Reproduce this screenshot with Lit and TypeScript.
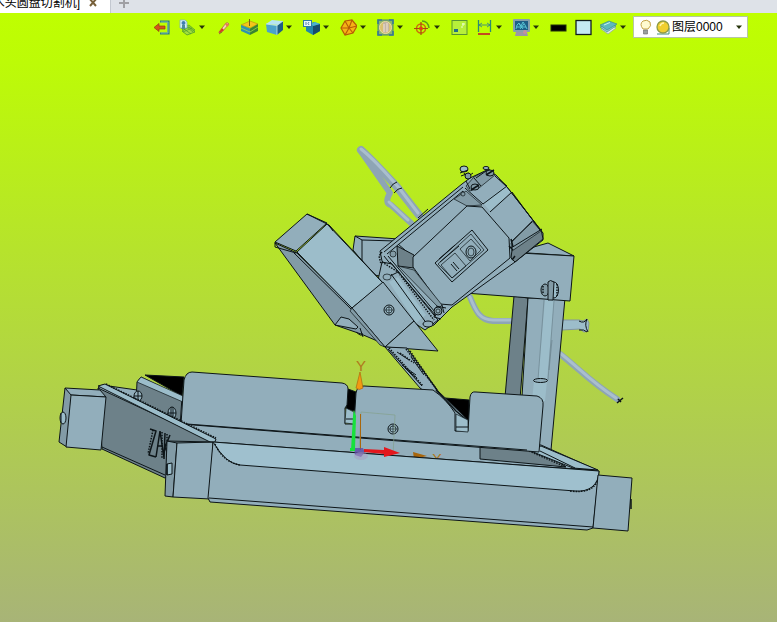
import { LitElement, html, svg, css } from "lit";
import { customElement } from "lit/decorators.js";

const caret = html`<svg class="caret" viewBox="0 0 12 17" aria-hidden="true"><path d="M3 6.500h6l-3 3.500z" fill="#26340a"/></svg>`;

const icons: Record<string, unknown> = {
  exit: svg`<path d="M6 2.500h8.500v12H6" fill="none" stroke="#2f7f86" stroke-width="2.200"/><path d="M7 3h7v11H7" fill="none" stroke="#86c9b8" stroke-width=".8"/><path d="M0 8.500l5-4V7h6v3H5v2.500z" fill="#d4541c" stroke="#8e4410" stroke-width=".7"/>`,
  sheets: svg`<path d="M2 9l8-3 6 5-8 4z" fill="#8ad02c" stroke="#5aa62c" stroke-width=".8"/><path d="M3 12l7-4 6 5-8 3z" fill="#a3de3c" stroke="#4b9e2c" stroke-width=".8"/><path d="M5 10l7 5M8 8l6 5M4 13l9-4" stroke="#4b9e2c" stroke-width=".7"/><path d="M1 1h5l2 2v6H1z" fill="#d9f0f5" stroke="#7fb4bd" stroke-width=".8"/><circle cx="4.500" cy="4" r="2" fill="#3f7eb0"/><path d="M3 6h3v4H3z" fill="#4d8b9b"/>`,
  pencil: svg`<path d="M3 13l7-9q2-1 3 1l-7 8-3 1z" fill="#f4d8b4" stroke="#b36a45" stroke-width=".8"/><path d="M3 13l3-4 2 2-4 3z" fill="#d2431c"/><path d="M9 5l2-1 2 2-2 2z" fill="#e77b52"/><path d="M3 15l3-2" stroke="#8c7a20"/>`,
  box: svg`<path d="M0 6l9-4 8 3-8 4z" fill="#f4c51b" stroke="#b89a10" stroke-width=".7"/><path d="M0 6l9 3.500V16l-9-4z" fill="#2f93b0"/><path d="M9 9.500L17 5v7l-8 4z" fill="#3a8432"/><path d="M0 9l9 4 8-5" stroke="#9ad84a" stroke-width=".8" fill="none"/><path d="M8.500 0v7" stroke="#725f1c"/>`,
  cube: svg`<path d="M0 5l6-4 11 1-5 4z" fill="#b7e4f2"/><path d="M0 5l11 1.500V16L1 13z" fill="#4ba2cb"/><path d="M11 6.500L17 2v9l-6 5z" fill="#1f5d86"/><path d="M0 5l11 1.500L17 2M11 6.500V16" fill="none" stroke="#c4e8f3" stroke-width=".8"/>`,
  view: svg`<path d="M3 6l8-3 6 2v7l-7 4-7-4z" fill="#2286a8"/><path d="M10 7l7-2v7l-7 4z" fill="#174d6c"/><path d="M8 5l4-2 5 2-7 2z" fill="#4bb3cd"/><rect x=".5" y="1.500" width="8" height="6" fill="#e9f6fa" stroke="#2d7aa5"/><path d="M3 3v3M6 3l-1 1.500L6 6" stroke="#2a6594" stroke-width=".8" fill="none"/>`,
  wire: svg`<path d="M5 2l7-1 5 6-4 7-8 2-4-7z" fill="#f6b315" stroke="#b75a06" stroke-width="1.200"/><path d="M5 2l4 7-4 7M12 1L9 9l4 5M1 9h8l8-2" fill="none" stroke="#b75a06" stroke-width="1.100"/>`,
  shade: svg`<rect x="1" y="1" width="15" height="15" fill="#8cb66b" stroke="#4c8377"/><circle cx="8.500" cy="8.500" r="6" fill="#d9c16f" stroke="#eddca0"/><path d="M6 4q4-3 6 1v6q-2 4-6 2z" fill="#c4b5a6"/><path d="M7 5v8M10 4v9" stroke="#f4e6cd"/><path d="M1 5V1h4M12 1h4v4M16 12v4h-4M5 16H1v-4" fill="none" stroke="#387a96" stroke-width="1.600"/>`,
  target: svg`<circle cx="7" cy="9.500" r="4.500" fill="none" stroke="#ca6e0b" stroke-width="1.500"/><path d="M7 3v13M0 9.500h14" stroke="#a84812" stroke-width="1.200"/><circle cx="7" cy="9.500" r="2" fill="#e04216"/><path d="M8 2q6 0 7 7" fill="none" stroke="#5f9c1b" stroke-width="1.500"/>`,
  panel: svg`<rect x="1" y="1.500" width="15" height="14" fill="#b7ef3a" stroke="#579432"/><rect x="3" y="10" width="4" height="3" fill="#236f87"/><path d="M11 5h3M12 4v3M10 8h2" stroke="#e8ffd0"/>`,
  dim: svg`<path d="M2.500 1v12M14.500 1v12" stroke="#2c8a74" stroke-width="1.300"/><path d="M3 6h11M3 6l3-2M3 6l3 2M14 6l-3-2M14 6l-3 2" fill="none" stroke="#2b7c91" stroke-width=".8"/><path d="M2 14h12v2H2z" fill="#c44a20"/>`,
  monitor: svg`<rect x="0" y="0" width="17" height="13" rx="1" fill="#86a0ac"/><rect x="2" y="2" width="13" height="9" fill="#1d5f86"/><path d="M3 10l1-4 2-2 2 3 2-4 2 3 2 4M4 8h9M6 5l4 5M11 5l-4 5" fill="none" stroke="#5fd0dc" stroke-width=".9"/><path d="M3 13h11l1 4H2z" fill="#9b98a4"/><circle cx="12" cy="13" r="2" fill="#c392a0"/>`,
  line: svg`<rect x="1" y="6" width="15" height="6" fill="#000" stroke="#20300a"/>`,
  fill: svg`<rect x="1" y="1.500" width="15" height="14" fill="#c4eaf2" stroke="#101c20" stroke-width="1.300"/>`,
  layer: svg`<path d="M1 10l7 5 8-6-5-3z" fill="#e4ece6" stroke="#8aa8a0" stroke-width=".7"/><path d="M0 8l7 5 9-6-5-3z" fill="#8ecbcf" stroke="#33838b" stroke-width=".6"/><path d="M0 6l7 5 10-6-8-3z" fill="#5eb9bd" stroke="#33838b" stroke-width=".6"/><path d="M4 6l6-2.500" stroke="#c8f1ee"/>`,
};

const tools: [string, string, boolean][] = [
  ["exit", "退出", false], ["sheets", "对象", true], ["pencil", "编辑", false], ["box", "拉伸", false],
  ["cube", "实体", true], ["view", "视图", true], ["wire", "线框", true], ["shade", "显示", true],
  ["target", "定位", true], ["panel", "面板", false], ["dim", "标注", true], ["monitor", "渲染", true],
  ["line", "线色", false], ["fill", "填充色", false], ["layer", "图层", true],
];

const screw = (x: number, y: number, r: number) => svg`
  <circle cx=${x} cy=${y} r=${r} class="face"/><circle cx=${x} cy=${y} r=${r * 0.6} class="fine light"/>
  <path class="thin" d="M${x - r + 1} ${y}h${2 * r - 2}M${x} ${y - r + 1}v${2 * r - 2}"/>`;

@customElement("cad-model")
class CadModel extends LitElement {
  static styles = css`
    :host { display: flex; flex: 1; min-height: 0; }
    svg { flex: 1; width: 100%; height: 100%; min-width: 0; }
    path, circle, ellipse { stroke: #0d1518; stroke-width: 1; stroke-linejoin: round; }
    .face { fill: #92aebb; }
    .light { fill: #9cbdca; }
    .lip { fill: #9fc0ce; }
    .mid { fill: #829ba6; }
    .dark { fill: #6d8189; }
    .black { fill: #000; }
    .ink { fill: none; }
    .fine { stroke-width: .7; }
    .thin { fill: none; stroke-width: .6; }
    .heavy { fill: none; stroke-width: 1.5; }
    .teeth { fill: none; stroke-width: 1.5; stroke-dasharray: 1.5 1.2; }
    .edge { fill: none; stroke: #647c86; stroke-width: .6; }
    .pipe { fill: none; stroke: #8ea5b5; stroke-width: 6; stroke-linecap: round; }
    .wide { stroke-width: 8; }
    .shine { fill: none; stroke: #aabfce; stroke-width: 3; stroke-linecap: round; }
    .soft { stroke: #8395a3; }
    .plain { stroke: none; }
    .ghost { fill: none; stroke: #84a08c; stroke-width: .7; }
    .green { fill: #17e23c; stroke: none; }
    .red { fill: #e3171d; stroke: none; }
    .orange { fill: #f29a12; stroke: #a75c09; stroke-width: .6; }
    .brown { fill: #a8660c; stroke: none; }
    .purple { fill: #5d4aa6; stroke: none; opacity: .8; }
    .pale { fill: #a99ac2; stroke: none; opacity: .5; }
    text { font: 15px "Liberation Sans", Arial, sans-serif; fill: #b0781c; }
  `;

  render() {
    return html`<svg viewBox="0 38 777 584" preserveAspectRatio="xMidYMin meet" role="img" aria-label="木头圆盘切割机">
      <!-- hoses and handles -->
      <path class="pipe" d="M360 150L390 193Q384 203 391 205L411 223"/>
      <path class="pipe wide" d="M361 150Q374 162 397 187L419 215"/>
      <path class="shine" d="M361 149Q376 161 399 188L418 213M389 202L408 220"/>
      <path class="ink" d="M390 188q3-5 7-6M394 193q4-5 8-5"/>
      <path class="pipe" d="M470 297C476 312 480 320 493 321H514"/>
      <path class="shine" d="M470 297C476 312 480 320 493 320H514"/>
      <path class="pipe" d="M560 354C577 367 590 382 617 399"/>
      <path class="shine" d="M560 353C577 366 590 381 616 398"/>
      <path class="heavy" d="M617 403l6-5M618 399l3 3"/>
      <path class="light soft" d="M561 320h18l4 1 4-2 2 4-1 8-4 1-4-3-18 1z"/>
      <path class="ink" d="M579 321q5 3 8-2M579 330q5-1 8 2M587 319q-3 6 1 13"/>

      <!-- column and arm -->
      <path class="dark" d="M514 296l14 2-8 101-15-2z"/>
      <path class="face" d="M528 298h37l-14 152-32-4z"/>
      <path class="light plain" d="M545 300h9l-7 80h-9z"/>
      <path class="edge" d="M544 300l-6 80M554 300l-6 80M552 340l-3 30"/>
      <path class="light plain" d="M534 381h13l-2 20h-13z"/>
      <ellipse class="face" cx="540.500" cy="380.500" rx="7" ry="2"/>
      <path class="face" d="M516 252l32-9 26 13-46-3z"/>
      <path class="face" d="M460 240l60 13 54 3-4 45-105-8z"/>
      <ellipse class="mid" cx="545" cy="290" rx="4" ry="6"/>
      <ellipse class="light" cx="554" cy="290" rx="4.500" ry="8"/>
      <path class="mid" d="M548 282q2-3 6 0l-1 18h-5z"/>
      <path class="teeth" d="M557 284v12M543 286v8"/>
      <path class="face" d="M355 236l44 3-1 40-24-4-21-25z"/>
      <path class="ink" d="M355 236l7 4 34 1M362 240v22"/>

      <!-- motor -->
      <path class="face" d="M380 251L462 184 470 178 487 170 496 175 507 187 543 233 543 240 515 262 452 307 434 325 424 329 382 261z"/>
      <path class="light plain" d="M483 203L505 186 511 192 490 211z"/>
      <path class="dark" d="M512 250l29-21 2 10-28 23-4-4z"/>
      <path class="mid fine" d="M511 243l21-22 9 10-29 20z"/>
      <path class="ink" d="M483 204l24-18M490 212l22-20M495 176l12 11 33 42M512 192l28 38M499 179l8 7M512 241l20-19M465 188l18 16M511 248l31-19"/>
      <path class="fine mid" d="M466 186l8-9 15-8 6 6-16 13-9 3z"/>
      <ellipse class="light" cx="464" cy="169" rx="4" ry="3"/>
      <path class="ink" d="M460 173l8-3M464 173l4 6M461 176l8-3M466 178l7-5M470 189l-4-8M481 186l-7-8M476 178l13-9"/>
      <ellipse class="mid" cx="468" cy="176" rx="3" ry="3"/>
      <ellipse class="mid" cx="475" cy="187" rx="4" ry="3"/>
      <ellipse class="mid" cx="490" cy="173" rx="4" ry="3"/>
      <ellipse class="light" cx="486" cy="168" rx="3" ry="1.500"/>
      <path class="heavy" d="M471 190l8-5M486 175l8-5"/>
      <path class="ink" d="M384 252L463 187M387 254L463 191l4 15M388 256l47 56M384 256l48 60M398 244l15 13M418 218l10-9"/>
      <path class="dark" d="M397 246l17 9v13l-16-2z"/>
      <path class="mid fine" d="M454 199l12-8 16 14-15 1z"/>
      <path class="face" d="M413 257L467 206l15 1 27 31 1 20-58 47-12-1-27-37z"/>
      <path class="mid fine" d="M398 266l16 4 28 35-3 3z"/>
      <path class="ink" d="M435 263l37-33 16 20-36 32z"/>
      <path class="fine ink" d="M438 264l33-30 13 16-32 28z"/>
      <path class="fine ink" d="M441 265l14-12 11 13-14 12zM460 249l11-10 10 11-11 11z"/>
      <path class="ink" d="M440 262l19-16M453 262l6 7M451 264l6 7M439 259l16-14"/>
      <ellipse class="ink" cx="471" cy="252" rx="5" ry="6"/>
      <ellipse class="fine ink" cx="471" cy="252" rx="3" ry="4"/>
      <circle class="fine mid" cx="463" cy="194" r="2"/>
      <circle class="fine mid" cx="393" cy="254" r="3"/>
      <path class="heavy" d="M511 239l2 8M509 246l4 4M512 260l3-4"/>
      <path class="teeth" d="M382 252l-3 4 2 8 10 8"/>

      <!-- collar behind the guard -->
      <path class="face" d="M382 262l10 2 46 56-13 10-12-8-35-42z"/>
      <path class="light plain" d="M389 282l9-5 28 38-10 8z"/>
      <path class="teeth" d="M382 262l16 10 36 48"/>
      <path class="ink" d="M390 262l46 54M391 274l36 50M388 277l10-5"/>
      <path class="ink" d="M436 306l10 2M437 308l-3 9 7 2M442 305l2 8M424 326l9-4"/>
      <ellipse class="fine face" cx="387" cy="277" rx="4" ry="3"/>
      <circle class="mid" cx="438" cy="311" r="4"/><circle class="fine face" cx="438" cy="311" r="2"/>
      <ellipse class="face" cx="428" cy="324" rx="5" ry="3"/>

      <!-- blade guard -->
      <path class="mid" d="M275 243l22 10 55 54 30 36-21-9-26-9z"/>
      <path class="face" d="M335 325l6-8 8 2 9 8-2 2z"/>
      <path class="face" d="M275 242l32-28 20 9-31 28z"/>
      <path class="light" d="M297 252l30-28 56 59-31 25z"/>
      <path class="ink" d="M275 242v5l21 6v-2M307 214l22 11 4 6M329 225l54 58M294 253l57 56 33 38"/>
      <path class="face" d="M352 308l31-26 31 39-29 26z"/>
      <path class="face" d="M414 321l24 30-53-4z"/>
      <path class="mid fine" d="M352 308l33 39-5-2-30-34z"/>
      ${screw(389, 310, 5)}
      <path class="ink" d="M356 332q7 6 6 1M360 328l3 9"/>

      <!-- far side of the bed -->
      <path class="face" d="M98 388l4-3 84 12v42l-50-20z"/>
      <path class="dark" d="M137 382l4-5 41 20-2 30-44-24z"/>
      <path class="black" d="M145 375l39 2-2 19z"/>
      <path class="light fine" d="M137 382l4-5 42 19v6z"/>
      <ellipse class="face" cx="138" cy="396" rx="4" ry="5"/><ellipse class="face" cx="172" cy="413" rx="4" ry="6"/>
      <path class="ink" d="M138 391v10M134 396h8M171 407v12M173 407v12M168 413h8"/>
      <path class="face" d="M181 421l360 24 56 25-384-20-34-26z"/>
      <path class="dark" d="M480 447l62 3 24 17-86-8z"/>
      <path class="light" d="M541 446l57 24-25-2-45-18z"/>
      <path class="teeth" d="M529 451l37 16"/>
      <path class="ink" d="M540 451l35 17"/>
      <path class="black" d="M348 389l8 3-1 19-9-2zM445 398l24 2v22l-16-13z"/>

      <!-- blade -->
      <path class="face" d="M385 347l22 1 31 43 30 29-1 12-13-1-2-20-32-23z"/>
      <path class="teeth" d="M389 348l34 38M406 349l31 41M410 351l27 39M400 353l14 10"/>
      <path class="ink" d="M397 352l12 8M402 365l14 10M405 368l12 10M411 357l13 18M388 349l34 37"/>
      <path class="heavy" d="M436 390l20 21 12 10"/>

      <!-- fence -->
      <path class="face" d="M181 424l3-44q2-8 8-8l150 11q6 1 6 6l-1 16-2 3v16h9l2-31q1-7 8-7l69 4q13 9 22 23v18h13l2-34q1-6 6-5l61 4q7 2 6 10l-4 46z"/>
      <path class="light fine" d="M346 408l8 4v12l-9-1zM456 414l12 6v12l-12-1z"/>
      <path class="ink" d="M346 419h8M456 427h12M187 424l340 26"/>
      ${screw(393, 429, 5)}

      <!-- side rail -->
      <path class="dark" d="M98 388l116 54-49 36-63-29z"/>
      <path class="light" d="M98 386l7-2 111 55-2 5z"/>
      <path class="teeth" d="M106 384l110 54"/>
      <path class="ink" d="M102 447l63 28"/>
      <path class="heavy" d="M150 429l6 2-7 24 7 2M160 431l-4 26M160 431l4 27M157 446h6M165 433l-1 26M170 435l-5 12 5 13"/>
      <path class="teeth" d="M153 430l-5 24M162 432v26M167 434v26"/>
      <path class="mid" d="M65 388l7 7-5 52-8-5z"/>
      <path class="face" d="M65 388l35 2 6 7-35-2z"/>
      <path class="face" d="M71 395l35 2-5 53-35-3z"/>
      <ellipse class="light" cx="63" cy="418" rx="3" ry="6"/><path class="ink" d="M61 413v10"/>

      <!-- axes -->
      <path class="ghost" d="M361 412l34 3-2 41M361 412l-2 40"/>
      <text x="356" y="371">Y</text><text x="432" y="464">X</text>
      <path class="orange" d="M360 372l3 16q-4 3-7 0z"/>
      <path class="green" d="M351 450l2-34 1-6 2 6-1 34z"/>
      <path class="brown" d="M413 452l14 4-13 3zM360 414h1v36h-1z"/>

      <!-- tray -->
      <path class="mid" d="M167 441l10 2-4 54-8-1z"/>
      <path class="face" d="M177 443l36-1-3 57-37-2z"/>
      <path class="ink" d="M167 441l46 1"/>
      <path class="light" d="M167 464l5-1v11l-5 1z"/><path class="heavy" d="M167 464v11"/>
      <path class="face" d="M213 442l386 29-6 57-6 2-377-28-2-4z"/>
      <path class="lip" d="M213 442l386 29q0 10-7 16-7 5-17 4L240 465q-14-1-27-23z"/>
      <path class="teeth" d="M215 444q8 18 25 21M570 491q24 3 28-12"/>
      <path class="ink" d="M209 498l384 29"/>
      <path class="face" d="M598 475l34 3-4 53-35-3z"/>
      <path class="heavy" d="M631 499v10"/>
      <path class="purple" d="M354 448h9l2 4-4 5-6-2z"/><ellipse class="pale" cx="361" cy="456" rx="7" ry="4"/>
      <path class="green" d="M350 448h5v3h-5z"/>
      <path class="red" d="M364 449l20 1v-3l16 6-16 4v-3l-20-2z"/>
    </svg>`;
  }
}

@customElement("app-root")
class AppRoot extends LitElement {
  static styles = css`
    :host {
      display: flex; flex-direction: column; min-height: 100vh; overflow: hidden;
      font: 12px/12px "Liberation Sans", "Noto Sans CJK SC", sans-serif; color: #000;
    }
    button { border: 0; background: none; padding: 0; margin: 0; font: inherit; color: inherit; }
    .tabs { display: flex; flex: none; box-sizing: border-box; height: 13px; background: #dee2e8; overflow: hidden; }
    .tab { display: flex; flex: none; justify-content: flex-end; align-items: flex-end; width: 111px; padding: 0 12px 4px 0; gap: 8px;
      box-sizing: border-box; background: #fff; border-right: 1px solid #c3c8d0; white-space: nowrap; }
    .name { flex: none; }
    .close, .add { display: flex; align-items: flex-end; }
    .close { padding-bottom: 2px; }
    .add { padding: 0 0 5px 8px; }
    .mark { display: block; width: 10px; height: 10px; }
    .stage { display: flex; flex: 1; flex-direction: column; background: linear-gradient(#bfff00, #bdfb06 8%, #a8b477); }
    .tools { display: flex; flex: none; align-items: center; height: 25px; padding: 3px 0 0 150px; box-sizing: border-box; }
    .tool { display: flex; flex: none; padding: 0 4px; }
    .icon { display: block; flex: none; width: 17px; height: 17px; }
    .caret { display: block; flex: none; width: 12px; height: 17px; }
    .layer { display: flex; flex: none; align-items: center; box-sizing: border-box; width: 115px; height: 22px; padding: 0 2px 0 4px;
      background: #fff; border: 1px solid #b6c6a4; }
    .layer select { flex: 1; min-width: 0; height: 20px; padding: 0; appearance: none; border: 0; background: none; font: inherit;
      line-height: 20px; color: #000; }
  `;

  render() {
    return html`
      <nav class="tabs">
        <div class="tab">
          <span class="name">木头圆盘切割机]</span>
          <button class="close" aria-label="关闭">
            <svg class="mark" viewBox="0 0 10 10"><path d="M1 1l7 8M9 1L2 9" stroke="#77603a" stroke-width="2"/></svg>
          </button>
        </div>
        <button class="add" aria-label="新建">
          <svg class="mark" viewBox="0 0 10 10"><path d="M5 0v10M0 5h10" stroke="#a0a0a4" stroke-width="2"/></svg>
        </button>
      </nav>
      <main class="stage">
        <div class="tools" role="toolbar">
          ${tools.map(([id, label, menu]) => html`
            <button class="tool" aria-label=${label}>
              <svg class="icon" viewBox="0 0 17 17" aria-hidden="true">${icons[id]}</svg>${menu ? caret : ""}
            </button>`)}
          <label class="layer">
            <svg class="icon" viewBox="0 0 17 17" aria-hidden="true">
              <path d="M5 10Q1 5 5 2q4-2 7 1 2 4-2 7z" fill="#fffbd0" stroke="#c4a246"/><path d="M5.500 11h4v4h-4z" fill="#9aa0a0" stroke="#666" stroke-width=".6"/>
            </svg>
            <svg class="icon" viewBox="0 0 17 17" aria-hidden="true">
              <path d="M2 15h12V9" fill="none" stroke="#3f8d7d"/><circle cx="8" cy="8" r="6" fill="#f0cf2f" stroke="#8d9b45" stroke-width="1.300"/><path d="M5 7q1-3 4-3" fill="none" stroke="#fff4a8" stroke-width="1.500"/>
            </svg>
            <select aria-label="图层"><option>图层0000</option></select>
            ${caret}
          </label>
        </div>
        <cad-model></cad-model>
      </main>`;
  }
}
